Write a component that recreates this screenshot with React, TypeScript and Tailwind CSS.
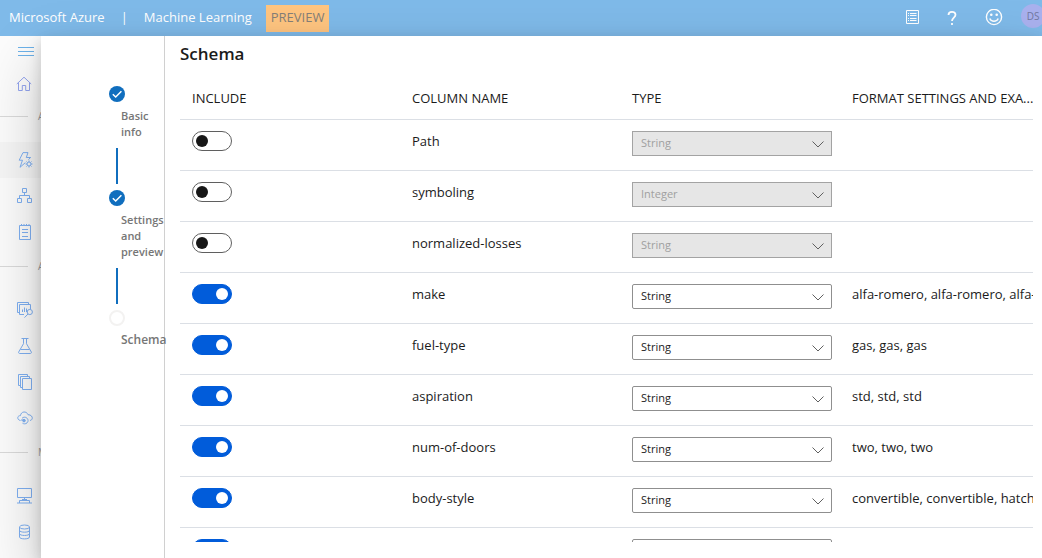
import { useState } from "react";
import type { ReactNode } from "react";

type Column = { name: string; type: string; include: boolean; examples: string };

const initialColumns: Column[] = [
  { name: "Path", type: "String", include: false, examples: "" },
  { name: "symboling", type: "Integer", include: false, examples: "" },
  { name: "normalized-losses", type: "String", include: false, examples: "" },
  { name: "make", type: "String", include: true, examples: "alfa-romero, alfa-romero, alfa-romero" },
  { name: "fuel-type", type: "String", include: true, examples: "gas, gas, gas" },
  { name: "aspiration", type: "String", include: true, examples: "std, std, std" },
  { name: "num-of-doors", type: "String", include: true, examples: "two, two, two" },
  { name: "body-style", type: "String", include: true, examples: "convertible, convertible, hatchback" },
  { name: "drive-wheels", type: "String", include: true, examples: "rwd, rwd, rwd" },
];

function Icon({ children }: { children: ReactNode }) {
  return (
    <svg viewBox="0 0 16 16" className="size-4 shrink-0" fill="none" stroke="currentColor" strokeWidth="1" aria-hidden="true">
      {children}
    </svg>
  );
}

const homeIcon = (
  <Icon>
    <path d="M.8 8 8 1.2 15.2 8M2.5 6.6v7.9h3.8V9.5h3.4v5h3.8V6.6" />
  </Icon>
);
const automlIcon = (
  <Icon>
    <path d="M10.500 5.500h3L11.500 7.700M13.500 5.500H9.300L11 .6H6L2.200 8.200h3.300L3 15.300l5.300-4.600" />
    <circle cx="12" cy="12" r="2" />
    <path d="M12 8.5V10M12 14v1.5M8.5 12H10M14 12h1.5M9.5 9.5l1 1M13.5 13.5l1 1M14.5 9.5l-1 1M10.5 13.5l-1 1" />
  </Icon>
);
const designerIcon = (
  <Icon>
    <path d="M5.5 .5h4v4h-4zM.5 10.5h4v4h-4zM10.5 10.5h4v4h-4zM7.5 4.5v3M2.5 10.5v-3h10v3" />
  </Icon>
);
const notebookIcon = (
  <Icon>
    <path d="M2.5 1.5h11v14h-11zM5 5.5h6M5 8.5h6M5 12.5h6M4.5 0v2M7 0v2M9.5 0v2M12 0v2" />
  </Icon>
);
const datasetIcon = (
  <Icon>
    <path d="M2.5 10.5H.5V.5h11v2M7 12.5H2.5v-10h11V7M5.5 10V7.5M7.5 10V5.5M9.5 10V6.5" />
    <circle cx="12.8" cy="10" r="2.6" />
    <path d="m11 12-3.5 3.6" />
  </Icon>
);
const flaskIcon = (
  <Icon>
    <path d="M4.5 .5h7M6.5 .5v5.2L1.7 14c-.3.8 0 1.5.9 1.5h10.8c.9 0 1.2-.7.9-1.5L9.500 5.700V.5M3.500 11.500h9" />
  </Icon>
);
const pagesIcon = (
  <Icon>
    <path d="M5.500 4.500h9v11h-9zM5.500 13.500h-2v-11h9v2M3.500 11.500h-2V.5h9v2" />
  </Icon>
);
const cloudIcon = (
  <Icon>
    <path d="M3.500 10.500C-.2 10-.1 5.500 3.500 5.600 3.900 1.200 9.600.7 11 4.700c4.500-.2 6 5 2 5.800" />
    <path d="M5 8.300c3.500-3.300 8.200 1.500 5 4.600-1.400 1.300-3.200 1.100-4.500.3M7 10h-3" />
    <circle cx="7" cy="10.600" r="1.300" fill="currentColor" />
  </Icon>
);
const computeIcon = (
  <Icon>
    <path d="M.5 .5h14v9H.5zM7.500 9.500v3M5 11.500h5M2.500 15v-2.500h10V15M0 15h15" />
  </Icon>
);
const datastoreIcon = (
  <Icon>
    <ellipse cx="7.500" cy="3" rx="5" ry="2" />
    <path d="M2.500 3v10c0 2.500 10 2.500 10 0V3M2.500 6.300c0 2.500 10 2.500 10 0M2.500 9.600c0 2.500 10 2.500 10 0" />
  </Icon>
);

function NavItem({ label, active, children }: { label: string; active?: boolean; children: ReactNode }) {
  return (
    <a
      href="#"
      aria-label={label}
      className={`flex h-9 items-center pl-[17px] ${active ? "bg-[#f6f6f6]" : ""}`}
    >
      {children}
    </a>
  );
}

function NavSection({ title }: { title: string }) {
  return (
    <div className="mb-2.5 flex h-8 items-center gap-2.5 text-[10px] text-[#a0a0a0]">
      <span className="h-px w-7 shrink-0 bg-[#dadada]" />
      <span>{title}</span>
    </div>
  );
}

function Sidebar() {
  return (
    <nav aria-label="Workspace" className="w-[41px] shrink-0 overflow-hidden bg-[#fcfcfc] text-[#7fb0f2]">
      <button type="button" aria-label="Expand menu" className="flex h-8 items-center pl-[18px] text-[#6cb2ea]">
        <svg viewBox="0 0 16 10" className="h-2.5 w-4" stroke="currentColor" aria-hidden="true">
          <path d="M0 .5h16M0 4.500h16M0 8.500h16" />
        </svg>
      </button>
      <a href="#" aria-label="Home" className="flex h-8 items-center pl-4 text-[#93a4ee]">
        {homeIcon}
      </a>
      <NavSection title="Author" />
      <NavItem label="Automated ML" active>{automlIcon}</NavItem>
      <NavItem label="Designer">{designerIcon}</NavItem>
      <NavItem label="Notebooks">{notebookIcon}</NavItem>
      <NavSection title="Assets" />
      <NavItem label="Datasets">{datasetIcon}</NavItem>
      <NavItem label="Experiments">{flaskIcon}</NavItem>
      <NavItem label="Models">{pagesIcon}</NavItem>
      <NavItem label="Endpoints">{cloudIcon}</NavItem>
      <NavSection title="Manage" />
      <NavItem label="Compute">{computeIcon}</NavItem>
      <NavItem label="Datastores">{datastoreIcon}</NavItem>
    </nav>
  );
}

function Header() {
  return (
    <header className="flex h-9 shrink-0 items-center bg-[#7fbae9] pl-[9px] text-[13px] text-white">
      <a href="#" className="whitespace-nowrap">Microsoft Azure</a>
      <span className="mx-4">|</span>
      <a href="#" className="whitespace-nowrap">Machine Learning</a>
      <span className="ml-3.5 flex h-[27px] items-center bg-[#ffc580] px-[5px] text-[#857f78]">PREVIEW</span>
      <div className="ml-auto flex shrink-0 items-center">
        <button type="button" aria-label="What's new" className="mr-7">
          <svg viewBox="0 0 14 16" className="h-4 w-3.5" fill="none" stroke="currentColor" aria-hidden="true">
            <path d="M1.500 .5h12v13h-12zM5 3.500h6.500M5 5.500h6.500M5 8.500h6.500M5 10.500h6.500M3 3.500h1M3 5.500h1M3 8.500h1M3 10.500h1" />
          </svg>
        </button>
        <button type="button" aria-label="Help" className="mr-7">
          <svg viewBox="0 0 10 16" className="h-4 w-2.5" fill="none" stroke="currentColor" strokeWidth="1.800" aria-hidden="true">
            <path d="M1.500 5C1.500 .8 8.500 .8 8.500 4.800 8.500 7.600 5 7.600 5 11M5 13v2" />
          </svg>
        </button>
        <button type="button" aria-label="Feedback" className="mr-[18px]">
          <svg viewBox="0 0 18 18" className="size-[18px]" fill="none" stroke="currentColor" strokeWidth="1.400" aria-hidden="true">
            <circle cx="9" cy="8" r="7.600" />
            <path d="M4.800 9.500c1.400 3.600 7 3.600 8.400 0" />
            <circle cx="6.300" cy="5.800" r=".6" fill="currentColor" />
            <circle cx="11.700" cy="5.800" r=".6" fill="currentColor" />
          </svg>
        </button>
        <button
          type="button"
          aria-label="Account DS"
          className="-mr-[3px] mb-1 size-6 rounded-full bg-[#a9b1ee] text-center text-[10px] text-[#72789f]"
        >
          DS
        </button>
      </div>
    </header>
  );
}

function DoneMark() {
  return (
    <svg viewBox="0 0 16 16" className="size-4" aria-hidden="true">
      <circle cx="8" cy="8" r="8" fill="#106ebe" />
      <path d="m3.800 8.200 2.900 2.800 5.700-5.800" fill="none" stroke="#fff" strokeWidth="1.500" />
    </svg>
  );
}

function Step({ label, done, current }: { label: string; done?: boolean; current?: boolean }) {
  return (
    <li aria-current={current ? "step" : undefined}>
      {done ? <DoneMark /> : <span className="block size-4 rounded-full border-2 border-[#f3f2f1] bg-white" />}
      <p className={`mt-1.5 ml-3 leading-4 text-[#767676] ${current ? "text-[12px] font-semibold" : "text-[11px] font-semibold"}`}>
        {label}
      </p>
      {done && <div className="mt-2 mb-1.5 ml-[7px] h-9 w-0.5 bg-[#106ebe]" />}
    </li>
  );
}

function TypeSelect({ column, onChange }: { column: Column; onChange: (type: string) => void }) {
  return (
    <div className="relative w-[200px]">
      <select
        aria-label={`Type of ${column.name}`}
        value={column.type}
        disabled={!column.include}
        onChange={(e) => onChange(e.target.value)}
        className="block h-[25px] w-full appearance-none rounded-xs border border-[#8f8f8f] bg-white px-2 text-[11px] text-[#222] disabled:rounded-none disabled:border-[#a3a3a3] disabled:bg-[#e6e6e6] disabled:text-[#a0a0a0] disabled:opacity-100"
      >
        <option>String</option>
        <option>Integer</option>
        <option>Decimal</option>
        <option>Boolean</option>
        <option>Date</option>
      </select>
      <svg
        viewBox="0 0 12 7"
        className="pointer-events-none absolute top-[10px] right-2 h-[7px] w-3"
        fill="none"
        stroke="#606060"
        aria-hidden="true"
      >
        <path d="m.5 .5 5.500 5.500L11.500 .5" />
      </svg>
    </div>
  );
}

export default function App() {
  const [columns, setColumns] = useState(initialColumns);
  const update = (index: number, patch: Partial<Column>) =>
    setColumns((all) => all.map((c, i) => (i === index ? { ...c, ...patch } : c)));

  return (
    <div className="flex h-screen flex-col overflow-hidden bg-white font-['Open_Sans','Noto_Sans',sans-serif] text-[#1b1b1b]">
      <Header />
      <div className="flex min-h-0 flex-1">
        <Sidebar />
        <div
          role="dialog"
          aria-label="Create dataset"
          className="relative flex min-w-0 flex-1 bg-white shadow-[0_26px_58px_rgba(0,0,0,0.22),0_5px_14px_rgba(0,0,0,0.18)]"
        >
          <ol className="w-[124px] shrink-0 border-r border-[#d0d0d0] pt-[50px] pl-[68px]">
            <Step label="Basic info" done />
            <Step label="Settings and preview" done />
            <Step label="Schema" current />
          </ol>
          <main className="flex min-w-0 flex-1 flex-col pt-1.5 pr-[9px] pb-4 pl-[15px]">
            <h1 className="text-[17px] leading-6 font-semibold">Schema</h1>
            <div className="mt-2.5 min-h-0 flex-1 overflow-hidden">
              <table className="w-full table-fixed border-collapse text-left">
                <thead>
                  <tr className="h-[43px] border-b border-[#dbdfe5] text-[13px] whitespace-nowrap">
                    <th className="w-[220px] pt-0.5 pl-3 font-medium">INCLUDE</th>
                    <th className="w-[220px] pt-0.5 pl-3 font-medium">COLUMN NAME</th>
                    <th className="w-[220px] pt-0.5 pl-3 font-medium">TYPE</th>
                    <th className="overflow-hidden pt-0.5 pl-3 font-medium">FORMAT SETTINGS AND EXA...</th>
                  </tr>
                </thead>
                <tbody>
                  {columns.map((column, i) => (
                    <tr key={column.name} className="h-[51px] border-b border-[#dbdfe5] align-top text-[13px] leading-5 whitespace-nowrap">
                      <td className="pt-[11px] pl-3">
                        <input
                          type="checkbox"
                          role="switch"
                          aria-label={`Include ${column.name}`}
                          checked={column.include}
                          onChange={(e) => update(i, { include: e.target.checked })}
                          className="flex h-5 w-10 appearance-none items-center rounded-full border border-[#5f5f5f] bg-white px-[3px] before:size-3 before:rounded-full before:bg-[#171717] checked:justify-end checked:border-[#015cda] checked:bg-[#015cda] checked:before:bg-white"
                        />
                      </td>
                      <td className="pt-[11px] pl-3">{column.name}</td>
                      <td className="pt-[11px] pl-3">
                        <TypeSelect column={column} onChange={(type) => update(i, { type })} />
                      </td>
                      <td className="overflow-hidden pt-[11px] pl-3">{column.examples}</td>
                    </tr>
                  ))}
                </tbody>
              </table>
            </div>
          </main>
        </div>
      </div>
    </div>
  );
}
